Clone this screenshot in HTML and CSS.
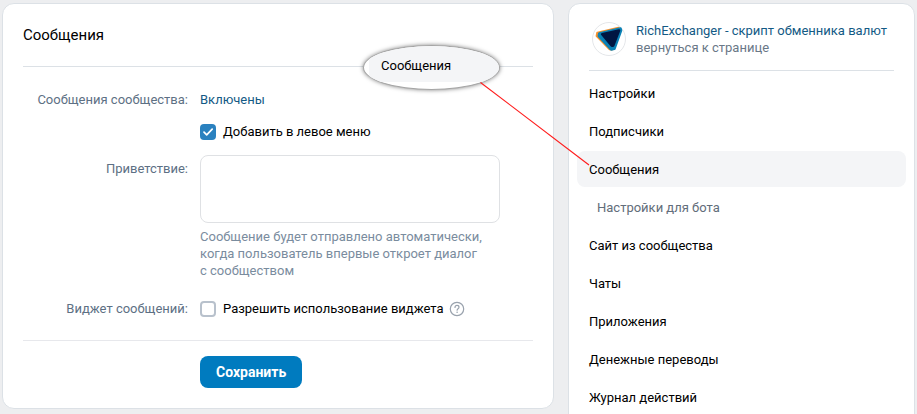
FILE: index.html
```html
<!DOCTYPE html>
<html lang="ru">
<head>
    <meta charset="UTF-8">
    <meta name="viewport" content="width=device-width, initial-scale=1.0">
    <title>Сообщения</title>
    <link rel="stylesheet" href="styles.css">
</head>
<body>

<div class="page">
    <main class="card settings">
        <h1 class="title">Сообщения</h1>

        <form class="form">
            <div class="row status-row">
                <span class="label">Сообщения сообщества:</span>
                <div class="field">
                    <a class="status" href="#">Включены</a>
                    <label class="check">
                        <input type="checkbox" class="checkbox" checked>
                        Добавить в левое меню
                    </label>
                </div>
            </div>

            <div class="row greeting-row">
                <label class="label" for="greeting">Приветствие:</label>
                <div class="field">
                    <textarea class="textarea" id="greeting"></textarea>
                    <p class="hint">Сообщение будет отправлено автоматически, когда пользователь впервые откроет диалог с&nbsp;сообществом</p>
                </div>
            </div>

            <div class="row widget-row">
                <span class="label">Виджет сообщений:</span>
                <div class="field widget">
                    <label class="check">
                        <input type="checkbox" class="checkbox">
                        Разрешить использование виджета
                    </label>
                    <svg class="help" viewBox="0 0 16 16" width="16" height="16">
                        <circle cx="8" cy="8" r="6.7" fill="none" stroke="#99a2ad" stroke-width="1.2"/>
                        <path d="M6 6.4C6 5.1 6.9 4.4 8 4.4s2 .7 2 1.8c0 1.5-1.9 1.5-1.9 3" fill="none" stroke="#99a2ad" stroke-width="1.2" stroke-linecap="round"/>
                        <circle cx="8.1" cy="11.3" r="0.8" fill="#99a2ad"/>
                    </svg>
                </div>
            </div>

            <div class="actions">
                <button class="save" type="button">Сохранить</button>
            </div>
        </form>
    </main>

    <aside class="card sidebar">
        <a class="group" href="#">
            <svg class="avatar" viewBox="0 0 34 34" width="34" height="34">
                <circle cx="17" cy="17" r="16.5" fill="#fff" stroke="#e4e6e9"/>
                <path d="M5.4 11 L26.5 6 L27 10 L20 27.4 L17.5 27 L4.8 14Z" fill="#f7922d" stroke="#f7922d" stroke-width="2.4" stroke-linejoin="round"/>
                <path d="M7.4 11.6 L28.4 6.6 L28.9 8.6 L22.3 26.7 L19.2 27.4 L7 14Z" fill="#0a81b5" stroke="#0a81b5" stroke-width="2.8" stroke-linejoin="round"/>
                <path d="M10.2 12.2 L27 8.6 L21.2 23.6 L19.8 23.6Z" fill="#001642" stroke="#001642" stroke-width="2.6" stroke-linejoin="round"/>
            </svg>
            <span class="group-text">
                <span class="group-name">RichExchanger - скрипт обменника валют</span>
                <span class="group-back">вернуться к странице</span>
            </span>
        </a>
        <nav class="menu">
            <a class="item" href="#">Настройки</a>
            <a class="item" href="#">Подписчики</a>
            <a class="item active" href="#">Сообщения</a>
            <a class="item sub" href="#">Настройки для бота</a>
            <a class="item" href="#">Сайт из сообщества</a>
            <a class="item" href="#">Чаты</a>
            <a class="item" href="#">Приложения</a>
            <a class="item" href="#">Денежные переводы</a>
            <a class="item" href="#">Журнал действий</a>
        </nav>
    </aside>

    <!-- callout pointing at the active menu item -->
    <div class="callout"><span class="callout-text">Сообщения</span></div>
    <svg class="pointer" viewBox="0 0 110 84" width="110" height="84">
        <path d="M0.5 0.5 L109 83" stroke="#ff1a1a" stroke-width="1.1"/>
    </svg>
</div>

</body>
</html>
```

FILE: styles.css
```css
* {
    box-sizing: border-box;
}

body {
    margin: 0;
    background-color: #edeef0;
    font-family: Roboto, "Liberation Sans", sans-serif;
    font-size: 13px;
    line-height: 18px;
    color: #000;
}

a {
    text-decoration: none;
    color: inherit;
}

.page {
    position: relative;
    display: flex;
    align-items: flex-start;
    gap: 14px;
    height: 100vh;
    padding: 3px 2px 0;
    overflow: hidden;
}

.card {
    background-color: #fff;
    border: 1px solid #dce1e6;
    border-radius: 12px;
}

.settings {
    flex: 1;
    padding: 0 20px 20px;
}

.title {
    margin: 0;
    padding: 22px 0;
    border-bottom: 1px solid #dce1e6;
    font-size: 15px;
    font-weight: 400;
    line-height: 18px;
}

.row {
    display: grid;
    grid-template-columns: 165px minmax(0, 300px);
    column-gap: 12px;
}

.label {
    text-align: right;
    color: #5d7084;
}

.status-row {
    padding-top: 24px;
}

.status {
    display: block;
    margin-bottom: 14px;
    color: #135a85;
}

.check {
    display: flex;
    align-items: center;
    gap: 7px;
}

.checkbox {
    appearance: none;
    width: 16px;
    height: 16px;
    margin: 0;
    border: 2px solid #b8c1cc;
    border-radius: 4px;
    background-color: #fff;
}

.checkbox:checked {
    border: none;
    background: #2a81bf url("data:image/svg+xml,%3Csvg xmlns='http://www.w3.org/2000/svg' viewBox='0 0 16 16'%3E%3Cpath d='M4 8.2l2.7 2.7L12.2 5.2' fill='none' stroke='white' stroke-width='1.7' stroke-linecap='round' stroke-linejoin='round'/%3E%3C/svg%3E");
}

.greeting-row {
    padding-top: 14px;
}

.greeting-row .label {
    padding-top: 5px;
}

.textarea {
    display: block;
    width: 100%;
    height: 68px;
    padding: 6px 9px;
    border: 1px solid #dfe1e4;
    border-radius: 8px;
    font: inherit;
    resize: none;
}

.hint {
    margin: 5px 0 0;
    line-height: 17px;
    color: #7a8c9e;
}

.widget-row {
    padding: 21px 0 22px;
}

.widget {
    display: flex;
    align-items: center;
    gap: 5px;
}

.actions {
    padding: 15px 0 0 177px;
    border-top: 1px solid #e7e8ec;
}

.save {
    display: block;
    height: 32px;
    padding: 0 16px;
    border: none;
    border-radius: 8px;
    background-color: #007bbf;
    color: #fff;
    font: inherit;
    font-size: 14px;
    font-weight: 700;
    cursor: pointer;
}

.sidebar {
    width: 347px;
    padding: 0 8px 20px;
}

.group {
    display: flex;
    gap: 10px;
    margin: 0 12px;
    padding: 18px 3px 14px;
    border-bottom: 1px solid #dce1e6;
}

.avatar {
    flex-shrink: 0;
}

.group-text {
    display: flex;
    flex-direction: column;
    line-height: 17px;
}

.group-name {
    color: #135a85;
    white-space: nowrap;
}

.group-back {
    color: #6a7887;
}

.menu {
    display: flex;
    flex-direction: column;
    gap: 2px;
    margin-top: 4px;
}

.item {
    padding: 10px 12px 8px;
    border-radius: 8px;
}

.item:hover,
.item.active {
    background-color: #f4f5f7;
}

.item.sub {
    padding-left: 20px;
    color: #626d7a;
}

.callout {
    position: absolute;
    top: 45px;
    right: 417px;
    display: flex;
    width: 137px;
    height: 45px;
    padding: 0 0 7px 5px;
    border: 1px solid #a5a5a5;
    border-radius: 50%;
    background-color: #fff;
    box-shadow: 0 0 4px rgba(0, 0, 0, 0.5);
    overflow: hidden;
}

.callout-text {
    flex: 1;
    padding: 11px 12px 8px;
    background-color: #f4f5f7;
}

.pointer {
    position: absolute;
    top: 82px;
    right: 327px;
}
```
